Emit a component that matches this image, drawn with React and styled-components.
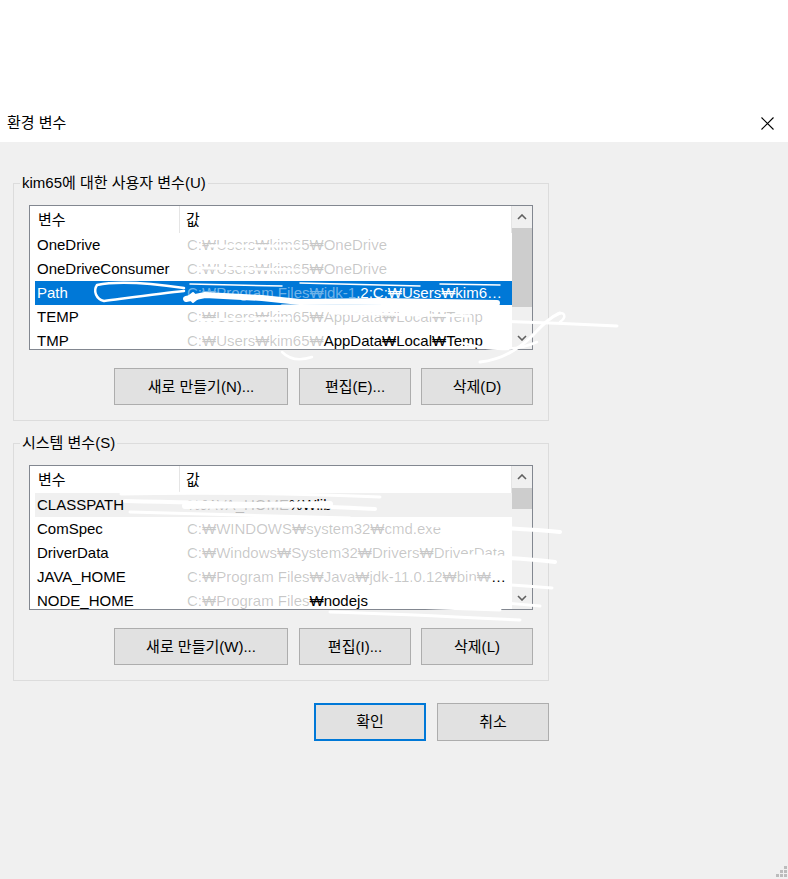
import React from "react"
import styled, { createGlobalStyle } from "styled-components"

const GlobalStyle = createGlobalStyle`
  html, body {
    margin: 0;
    padding: 0;
    background: #fff;
  }
  body {
    font-family: "Liberation Sans", "Noto Sans CJK KR", sans-serif;
    color: #000;
  }
`

const Window = styled.div`
  position: relative;
  width: 788px;
  height: 879px;
  display: flex;
  flex-direction: column;
  background: #fff;
  overflow: hidden;
`

const TitleBar = styled.div`
  margin-top: 104px;
  height: 38px;
  display: flex;
  align-items: center;
  justify-content: space-between;
  padding: 0 14px 0 7px;
  font-size: 15px;
  line-height: 20px;
`

const Body = styled.div`
  flex: 1;
  background: #f0f0f0;
  display: flex;
  flex-direction: column;
  padding: 31px 0 0 13px;
`

const Group = styled.fieldset`
  box-sizing: border-box;
  width: 536px;
  margin: ${(p) => (p.$first ? "0" : "12px 0 0")};
  padding: 0;
  border: 1px solid #dcdcdc;
  min-inline-size: 0;
`

const Legend = styled.legend`
  margin-left: 6px;
  padding: 0 2px;
  font-size: 15px;
  line-height: 20px;
`

const GroupInner = styled.div`
  padding: 12px 15px 15px 15px;
`

const List = styled.div`
  box-sizing: border-box;
  width: 504px;
  height: 145px;
  border: 1px solid #828790;
  background: #fff;
  display: flex;
`

const ListBody = styled.div`
  flex: 1;
  min-width: 0;
  overflow: hidden;
`

const Header = styled.div`
  display: flex;
  height: 27px;
  font-size: 15px;
`

const HeadCell = styled.div`
  box-sizing: border-box;
  display: flex;
  align-items: center;
  width: ${(p) => p.$w || "auto"};
  flex: ${(p) => (p.$w ? "none" : "1")};
  padding-left: ${(p) => p.$pl}px;
  border-right: 1px solid #e5e5e5;
  line-height: 20px;
`

const Row = styled.div`
  display: flex;
  align-items: center;
  height: 24px;
  margin-left: 5px;
  font-size: 15px;
  line-height: 18px;
  background: ${(p) => p.$bg || "transparent"};
  color: ${(p) => (p.$sel ? "#fff" : "#000")};
`

const NameCell = styled.div`
  box-sizing: border-box;
  width: 152px;
  flex: none;
  padding-left: 2px;
  white-space: nowrap;
  overflow: hidden;
`

const ValueCell = styled.div`
  flex: 1;
  min-width: 0;
  padding-right: 6px;
  white-space: nowrap;
  overflow: hidden;
  text-overflow: ellipsis;
`

const Faint = styled.span`
  color: ${(p) => (p.$sel ? "rgba(255,255,255,0.45)" : "rgba(0,0,0,0.22)")};
`

const ScrollBar = styled.div`
  width: 20px;
  flex: none;
  display: flex;
  flex-direction: column;
  background: #f0f0f0;
`

const ArrowBtn = styled.div`
  height: 22px;
  display: flex;
  align-items: center;
  justify-content: center;
`

const Thumb = styled.div`
  height: ${(p) => p.$h}px;
  background: #cdcdcd;
`

const Track = styled.div`
  flex: 1;
`

const ButtonRow = styled.div`
  display: flex;
  justify-content: flex-end;
  margin-top: ${(p) => p.$mt}px;
  width: ${(p) => p.$w}px;
`

const Button = styled.button`
  box-sizing: border-box;
  width: ${(p) => p.$w}px;
  height: ${(p) => p.$h || 37}px;
  margin-left: ${(p) => p.$ml || 0}px;
  background: #e1e1e1;
  border: ${(p) => (p.$primary ? "2px solid #0078d7" : "1px solid #adadad")};
  font-family: "Liberation Sans", "Noto Sans CJK KR", sans-serif;
  font-size: 15px;
  line-height: 20px;
  color: #000;
  padding: 0;
`

const Grip = styled.div`
  margin-top: auto;
  align-self: flex-end;
  display: flex;
  line-height: 0;
`

const Scribbles = styled.svg`
  position: absolute;
  left: 0;
  top: 0;
  pointer-events: none;
`

const Chevron = ({ up }) => (
  <svg width="10" height="6" viewBox="0 0 10 6">
    <polyline
      points={up ? "1,5 5,1 9,5" : "1,1 5,5 9,1"}
      fill="none"
      stroke="#606060"
      strokeWidth="1.6"
    />
  </svg>
)

const userVars = [
  { name: "OneDrive", faint: "C:₩Users₩kim65₩OneDrive" },
  { name: "OneDriveConsumer", faint: "C:₩Users₩kim65₩OneDrive" },
  {
    name: "Path",
    faint: "C:₩Program Files₩jdk-1",
    clear: ".2;C:₩Users₩kim65₩AppData₩Local₩Microsoft",
    sel: true,
  },
  { name: "TEMP", faint: "C:₩Users₩kim65₩AppData₩Local₩Temp" },
  { name: "TMP", faint: "C:₩Users₩kim65₩", clear: "AppData₩Local₩Temp" },
]

const systemVars = [
  { name: "CLASSPATH", faint: "%JAVA_HOME", clear: "%₩lib", dim: true },
  { name: "ComSpec", faint: "C:₩WINDOWS₩system32₩cmd.exe" },
  { name: "DriverData", faint: "C:₩Windows₩System32₩Drivers₩DriverData" },
  { name: "JAVA_HOME", faint: "C:₩Program Files₩Java₩jdk-11.0.12₩bin₩server₩lib" },
  { name: "NODE_HOME", faint: "C:₩Program Files", clear: "₩nodejs" },
]

const VarList = ({ rows, thumb }) => (
  <List>
    <ListBody>
      <Header>
        <HeadCell $w="150px" $pl={8}>변수</HeadCell>
        <HeadCell $pl={6}>값</HeadCell>
      </Header>
      {rows.map((r) => (
        <Row
          key={r.name}
          $sel={r.sel}
          $bg={r.sel ? "#0078d7" : r.dim ? "#f0f0f0" : null}
        >
          <NameCell>{r.name}</NameCell>
          <ValueCell>
            <Faint $sel={r.sel}>{r.faint}</Faint>
            {r.clear}
          </ValueCell>
        </Row>
      ))}
    </ListBody>
    <ScrollBar>
      <ArrowBtn>
        <Chevron up />
      </ArrowBtn>
      <Thumb $h={thumb} />
      <Track />
      <ArrowBtn>
        <Chevron />
      </ArrowBtn>
    </ScrollBar>
  </List>
)

const VarGroup = ({ title, rows, thumb, keys, first }) => (
  <Group $first={first}>
    <Legend>{title}</Legend>
    <GroupInner>
      <VarList rows={rows} thumb={thumb} />
      <ButtonRow $mt={18} $w={504}>
        <Button $w={174}>새로 만들기({keys[0]})...</Button>
        <Button $w={112} $ml={11}>편집({keys[1]})...</Button>
        <Button $w={112} $ml={10}>삭제({keys[2]})</Button>
      </ButtonRow>
    </GroupInner>
  </Group>
)

const App = () => {
  return (
    <Window>
      <GlobalStyle />
      <TitleBar>
        <span>환경 변수</span>
        <svg width="13" height="13" viewBox="0 0 13 13">
          <path d="M0.5,0.5 L12.5,12.5 M12.5,0.5 L0.5,12.5" stroke="#000" strokeWidth="1.1" />
        </svg>
      </TitleBar>
      <Body>
        <VarGroup
          first
          title="kim65에 대한 사용자 변수(U)"
          rows={userVars}
          thumb={79}
          keys={["N", "E", "D"]}
        />
        <VarGroup
          title="시스템 변수(S)"
          rows={systemVars}
          thumb={21}
          keys={["W", "I", "L"]}
        />
        <ButtonRow $mt={22} $w={536}>
          <Button $w={112} $h={38} $primary>확인</Button>
          <Button $w={112} $h={38} $ml={11}>취소</Button>
        </ButtonRow>
        <Grip>
          <svg width="13" height="13" viewBox="0 0 13 13">
            <g fill="#bcbcbc">
              <rect x="9" y="0" width="3" height="3" />
              <rect x="5" y="4" width="3" height="3" />
              <rect x="9" y="4" width="3" height="3" />
              <rect x="1" y="8" width="3" height="3" />
              <rect x="5" y="8" width="3" height="3" />
              <rect x="9" y="8" width="3" height="3" />
            </g>
          </svg>
        </Grip>
      </Body>

      <Scribbles width="788" height="879" viewBox="0 0 788 879">
        <g fill="none" stroke="#fff" strokeLinecap="round" strokeLinejoin="round">
          {/* user list redaction */}
          <path d="M184,288 C150,283 115,281 97,285 C93,291 96,299 104,301 C135,297 165,293 184,291" strokeWidth="2.5" />
          <path d="M190,284 L282,286 M300,283 L420,286 M440,284 L500,285" strokeWidth="1.5" />
          <path d="M186,299 L205,295 L262,298 L300,302 L380,301 L497,303" strokeWidth="6" />
          <path d="M188,297 L193,293 L198,298 L193,302 Z" strokeWidth="2" fill="#fff" />
          <path d="M282,307 L496,306" strokeWidth="5" />
          <path d="M200,320 L290,318 M330,313 L470,316" strokeWidth="3" />
          <path d="M210,246 L300,246 M200,268 L300,270" strokeWidth="3" />
          <path d="M492,321 C530,322 580,324 617,326" strokeWidth="3" />
          <path d="M560,313 C548,318 540,328 530,338 C515,352 500,360 480,362" strokeWidth="3" />
          <path d="M557,314 C565,311 567,317 560,322" strokeWidth="2.5" />
          <path d="M462,343 C488,350 515,352 537,342" strokeWidth="2.5" />
          <path d="M282,352 C290,360 300,361 312,357" strokeWidth="2.5" />
          {/* system list redaction */}
          <path d="M121,494 C200,492 300,494 380,497" strokeWidth="3" />
          <path d="M125,501 C220,503 300,505 375,509" strokeWidth="4" />
          <path d="M130,512 C200,514 280,516 350,518" strokeWidth="3" />
          <path d="M185,506 L330,504" strokeWidth="6" />
          <path d="M430,525 C480,527 520,528 560,532" strokeWidth="4" />
          <path d="M460,556 C500,557 530,559 555,562" strokeWidth="4" />
          <path d="M470,582 C500,584 525,586 552,588" strokeWidth="3" />
          <path d="M420,598 C470,600 510,603 540,606" strokeWidth="3" />
          <path d="M330,612 C400,614 460,617 520,620" strokeWidth="3" />
          <path d="M380,606 L500,610" strokeWidth="3" />
        </g>
      </Scribbles>
    </Window>
  )
}

export default App
